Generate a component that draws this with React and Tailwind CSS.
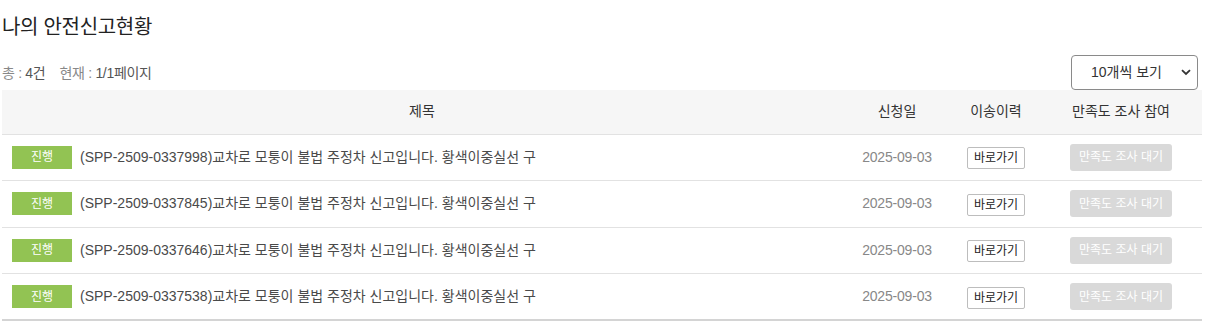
const rows = [
  { id: 'SPP-2509-0337998' },
  { id: 'SPP-2509-0337845' },
  { id: 'SPP-2509-0337646' },
  { id: 'SPP-2509-0337538' },
]

const App = () => {
  return (
    <div className="w-[1220px] h-[326px] bg-white text-[#333] font-['Liberation_Sans','Noto_Sans_CJK_KR',sans-serif]">
      <div className="pl-[2px] w-[1202px]">
        <h2 className="pt-[14px] h-[48px] text-[20px] leading-[26px] text-[#222] tracking-[-0.3px]">나의 안전신고현황</h2>
        <div className="flex items-end justify-between h-[42px]">
          <p className="text-[14px] leading-[20px] text-[#888] pb-[7px] tracking-[-0.3px]">
            총 : <span className="text-[#555]">4건</span>
            <span className="ml-[14px]">현재 : <span className="text-[#555]">1/1페이지</span></span>
          </p>
          <div className="relative w-[127px] h-[35px] mr-[4px]">
            <select className="appearance-none w-full h-full border border-[#8a8a8a] rounded-[4px] pl-[19px] text-[14px] text-[#333] bg-white outline-none">
              <option>10개씩 보기</option>
            </select>
            <svg className="absolute right-[7px] top-[14px] pointer-events-none" width="10" height="7" viewBox="0 0 10 7">
              <path d="M1 1.2 L5 5 L9 1.2" fill="none" stroke="#333" strokeWidth="1.8" />
            </svg>
          </div>
        </div>
        <table className="w-[1200px] table-fixed border-collapse border-b-2 border-[#d4d4d4]">
          <colgroup>
            <col className="w-[840px]" />
            <col className="w-[110px]" />
            <col className="w-[88px]" />
            <col className="w-[162px]" />
          </colgroup>
          <thead>
            <tr className="bg-[#f6f6f6] h-[44px] border-b border-[#e2e2e2] text-[14px] text-[#333]">
              <th className="font-normal">제목</th>
              <th className="font-normal">신청일</th>
              <th className="font-normal">이송이력</th>
              <th className="font-normal">만족도 조사 참여</th>
            </tr>
          </thead>
          <tbody>
            {rows.map((r, i) => (
              <tr key={r.id} className={`h-[46.5px] ${i < rows.length - 1 ? 'border-b border-[#e2e2e2]' : ''}`}>
                <td className="pl-[10px]">
                  <div className="flex items-center">
                    <span className="w-[60px] h-[23px] bg-[#92c353] text-white text-[12px] flex items-center justify-center">진행</span>
                    <span className="ml-[8px] text-[14px] text-[#4a4a4a]">({r.id})교차로 모퉁이 불법 주정차 신고입니다. 황색이중실선 구</span>
                  </div>
                </td>
                <td className="text-center text-[14px] text-[#888] tracking-[-0.2px]">2025-09-03</td>
                <td className="text-center">
                  <button className="h-[22px] px-[6px] border border-[#bdbdbd] rounded-[2px] text-[12px] text-[#222] bg-white">바로가기</button>
                </td>
                <td className="text-center">
                  <button className="w-[102px] h-[27px] rounded-[3px] bg-[#d9d9d9] text-white text-[12px]">만족도 조사 대기</button>
                </td>
              </tr>
            ))}
          </tbody>
        </table>
      </div>
    </div>
  )
}

export default App
